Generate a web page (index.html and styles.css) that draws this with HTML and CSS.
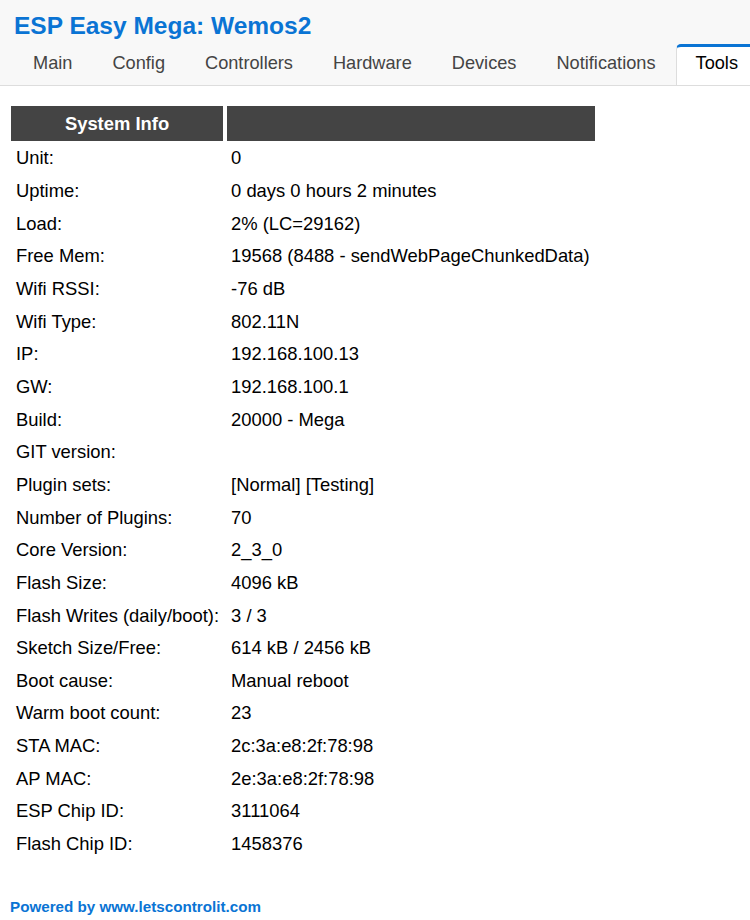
FILE: index.html
```html
<!DOCTYPE html>
<html>
<head>
<meta charset="utf-8">
<link rel="stylesheet" href="styles.css">
</head>
<body>
<header class="headermenu">
  <h1 class="title">ESP Easy Mega: Wemos2</h1>
  <nav class="menubar">
    <a class="menu">Main</a>
    <a class="menu">Config</a>
    <a class="menu">Controllers</a>
    <a class="menu">Hardware</a>
    <a class="menu">Devices</a>
    <a class="menu">Notifications</a>
    <a class="menu active">Tools</a>
  </nav>
</header>
<main class="content">
  <table class="normal">
    <tr><th class="col1">System Info</th><th class="col2"></th></tr>
    <tr><td>Unit:</td><td>0</td></tr>
    <tr><td>Uptime:</td><td>0 days 0 hours 2 minutes</td></tr>
    <tr><td>Load:</td><td>2% (LC=29162)</td></tr>
    <tr><td>Free Mem:</td><td>19568 (8488 - sendWebPageChunkedData)</td></tr>
    <tr><td>Wifi RSSI:</td><td>-76 dB</td></tr>
    <tr><td>Wifi Type:</td><td>802.11N</td></tr>
    <tr><td>IP:</td><td>192.168.100.13</td></tr>
    <tr><td>GW:</td><td>192.168.100.1</td></tr>
    <tr><td>Build:</td><td>20000 - Mega</td></tr>
    <tr><td>GIT version:</td><td></td></tr>
    <tr><td>Plugin sets:</td><td>[Normal] [Testing]</td></tr>
    <tr><td>Number of Plugins:</td><td>70</td></tr>
    <tr><td>Core Version:</td><td>2_3_0</td></tr>
    <tr><td>Flash Size:</td><td>4096 kB</td></tr>
    <tr><td>Flash Writes (daily/boot):</td><td>3 / 3</td></tr>
    <tr><td>Sketch Size/Free:</td><td>614 kB / 2456 kB</td></tr>
    <tr><td>Boot cause:</td><td>Manual reboot</td></tr>
    <tr><td>Warm boot count:</td><td>23</td></tr>
    <tr><td>STA MAC:</td><td>2c:3a:e8:2f:78:98</td></tr>
    <tr><td>AP MAC:</td><td>2e:3a:e8:2f:78:98</td></tr>
    <tr><td>ESP Chip ID:</td><td>3111064</td></tr>
    <tr><td>Flash Chip ID:</td><td>1458376</td></tr>
  </table>
</main>
<footer class="footer">
  <h6 class="powered">Powered by <a class="link">www.letscontrolit.com</a></h6>
</footer>
</body>
</html>
```

FILE: styles.css
```css
* {
  box-sizing: border-box;
}
html, body {
  margin: 0;
  padding: 0;
  background: #fff;
  font-family: "Liberation Sans", Arial, sans-serif;
}
.headermenu {
  background: #f8f8f8;
  border-bottom: 1px solid #ddd;
  height: 86px;
  overflow: hidden;
}
.title {
  margin: 0;
  padding: 12px 0 0 14px;
  height: 44px;
  font-size: 24.5px;
  font-weight: bold;
  color: #0a74d4;
  line-height: 28px;
}
.menubar {
  display: flex;
  padding-left: 13px;
  white-space: nowrap;
}
.menu {
  display: block;
  padding: 6px 19px 11px 19px;
  font-size: 18.2px;
  line-height: 21px;
  color: #444;
  border: solid transparent;
  border-width: 3px 1px 1px 1px;
  border-radius: 5px 5px 0 0;
}
.menu.active {
  color: #000;
  background: #fff;
  border-color: #0a74d4 #ddd #fff #ddd;
  padding-right: 40px;
}
.content {
  padding: 20px 0 0 7px;
}
.normal {
  border-collapse: separate;
  border-spacing: 4px 0;
  font-size: 18.4px;
  color: #000;
}
.normal th {
  background: #444;
  color: #fff;
  font-weight: bold;
  height: 35px;
  padding: 0;
  text-align: center;
}
.col1 {
  width: 212px;
}
.col2 {
  width: 368px;
}
.normal td {
  height: 32.67px;
  padding: 2px 4px 0 4px;
  white-space: nowrap;
  vertical-align: middle;
}
.normal td:first-child {
  padding-left: 5px;
}
.footer {
  padding: 39px 0 0 10px;
}
.powered {
  margin: 0;
  font-size: 15.2px;
  font-weight: bold;
  color: #0a74d4;
  line-height: 18px;
}
.link {
  color: #0a74d4;
  text-decoration: none;
}
```
